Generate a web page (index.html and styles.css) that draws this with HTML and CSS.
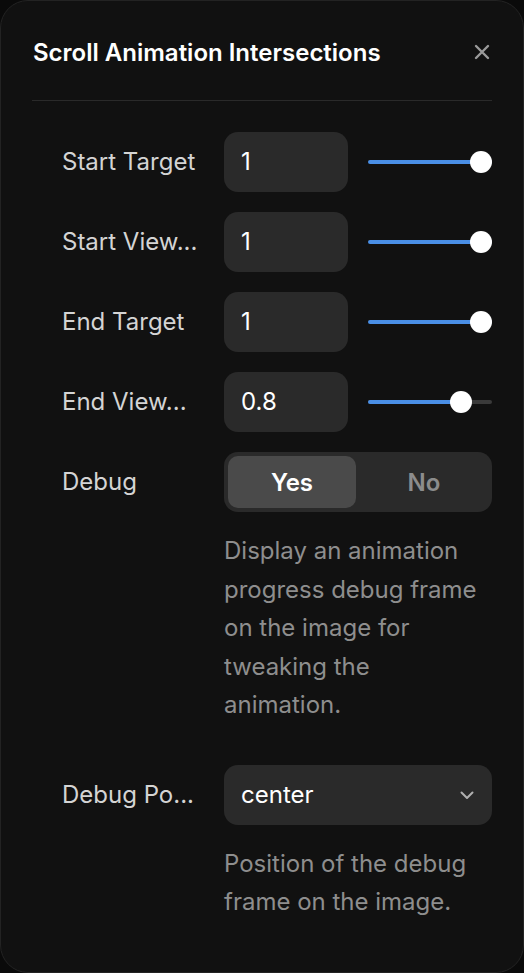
FILE: index.html
```html
<!DOCTYPE html>
<html lang="en">
<head>
<meta charset="utf-8">
<title>Scroll Animation Intersections</title>
<link rel="stylesheet" href="styles.css">
</head>
<body>
<div class="panel">
  <div class="header">
    <h1 class="title">Scroll Animation Intersections</h1>
    <button class="close" aria-label="Close">
      <svg width="16" height="16" viewBox="0 0 16 16"><path d="M2 2 L14 14 M14 2 L2 14" stroke="#9a9a9a" stroke-width="2.4" stroke-linecap="round" fill="none"/></svg>
    </button>
  </div>
  <div class="divider"></div>
  <div class="rows">
    <div class="row">
      <div class="label">Start Target</div>
      <div class="control num">
        <div class="input">1</div>
        <div class="slider"><div class="track"><div class="fill" style="width:100%"></div></div><div class="thumb" style="left:calc((100% - 22px) * 1)"></div></div>
      </div>
    </div>
    <div class="row">
      <div class="label">Start View...</div>
      <div class="control num">
        <div class="input">1</div>
        <div class="slider"><div class="track"><div class="fill" style="width:100%"></div></div><div class="thumb" style="left:calc((100% - 22px) * 1)"></div></div>
      </div>
    </div>
    <div class="row">
      <div class="label">End Target</div>
      <div class="control num">
        <div class="input">1</div>
        <div class="slider"><div class="track"><div class="fill" style="width:100%"></div></div><div class="thumb" style="left:calc((100% - 22px) * 1)"></div></div>
      </div>
    </div>
    <div class="row">
      <div class="label">End View...</div>
      <div class="control num">
        <div class="input">0.8</div>
        <div class="slider"><div class="track"><div class="fill" style="width:75%"></div></div><div class="thumb" style="left:calc((100% - 22px) * 0.8)"></div></div>
      </div>
    </div>
    <div class="row">
      <div class="label">Debug</div>
      <div class="control">
        <div class="segmented">
          <div class="seg active">Yes</div>
          <div class="seg">No</div>
        </div>
        <p class="desc">Display an animation progress debug frame on the image for tweaking the animation.</p>
      </div>
    </div>
    <div class="row">
      <div class="label">Debug Po...</div>
      <div class="control">
        <div class="select">
          <span>center</span>
          <svg width="14" height="14" viewBox="0 0 14 14"><path d="M1.5 4.5 L7 10 L12.5 4.5" stroke="#b0b0b0" stroke-width="2" stroke-linecap="round" stroke-linejoin="round" fill="none"/></svg>
        </div>
        <p class="desc">Position of the debug frame on the image.</p>
      </div>
    </div>
  </div>
</div>
</body>
</html>
```

FILE: styles.css
```css
* { box-sizing: border-box; }
html, body { margin: 0; padding: 0; }
body {
  background: #0a0a0a;
  font-family: Inter, "Noto Sans", "Liberation Sans", sans-serif;
  width: 524px;
  height: 973px;
}
.panel {
  width: 524px;
  height: 973px;
  background: #111111;
  border: 1px solid #232323;
  border-radius: 28px;
  padding: 31px 31px 0 31px;
}
.header {
  height: 40px;
  display: flex;
  align-items: center;
  justify-content: space-between;
  margin-bottom: 28px;
}
.title {
  margin: 0;
  font-size: 24px;
  font-weight: 600;
  color: #ffffff;
  padding-left: 1px;
}
.close {
  background: none;
  border: 0;
  padding: 0;
  margin-right: 2px;
  width: 16px;
  height: 16px;
  display: flex;
}
.divider {
  height: 1px;
  background: #2a2a2a;
}
.rows {
  padding: 31px 0 0 30px;
  display: flex;
  flex-direction: column;
  gap: 20px;
}
.row {
  display: grid;
  grid-template-columns: 148px 268px;
  column-gap: 14px;
  align-items: start;
}
.label {
  height: 60px;
  line-height: 60px;
  font-size: 24px;
  color: #d4d4d4;
  white-space: nowrap;
  overflow: hidden;
}
.control.num {
  display: flex;
  align-items: center;
  gap: 20px;
}
.input {
  width: 124px;
  height: 60px;
  border-radius: 14px;
  background: #2a2a2a;
  color: #ffffff;
  font-size: 24px;
  line-height: 60px;
  padding-left: 17px;
}
.slider {
  position: relative;
  width: 124px;
  height: 22px;
  display: flex;
  align-items: center;
}
.track {
  width: 100%;
  height: 4px;
  border-radius: 2px;
  background: #3a3a3a;
  overflow: hidden;
}
.fill {
  height: 100%;
  background: #4a8fe6;
}
.thumb {
  position: absolute;
  top: 0;
  width: 22px;
  height: 22px;
  border-radius: 50%;
  background: #ffffff;
}
.segmented {
  height: 60px;
  border-radius: 14px;
  background: #2a2a2a;
  padding: 4px;
  gap: 4px;
  display: flex;
}
.seg {
  flex: 1;
  display: flex;
  align-items: center;
  justify-content: center;
  font-size: 24px;
  font-weight: 600;
  color: #8c8c8c;
  border-radius: 10px;
}
.seg.active {
  background: #4a4a4a;
  color: #ffffff;
}
.desc {
  margin: 20px 0 20px 0;
  font-size: 24px;
  line-height: 38.5px;
  color: #8e8e8e;
  padding-right: 10px;
}
.select {
  height: 60px;
  border-radius: 14px;
  background: #2a2a2a;
  display: flex;
  align-items: center;
  justify-content: space-between;
  padding: 0 18px 0 17px;
  font-size: 24px;
  color: #ffffff;
}
```
